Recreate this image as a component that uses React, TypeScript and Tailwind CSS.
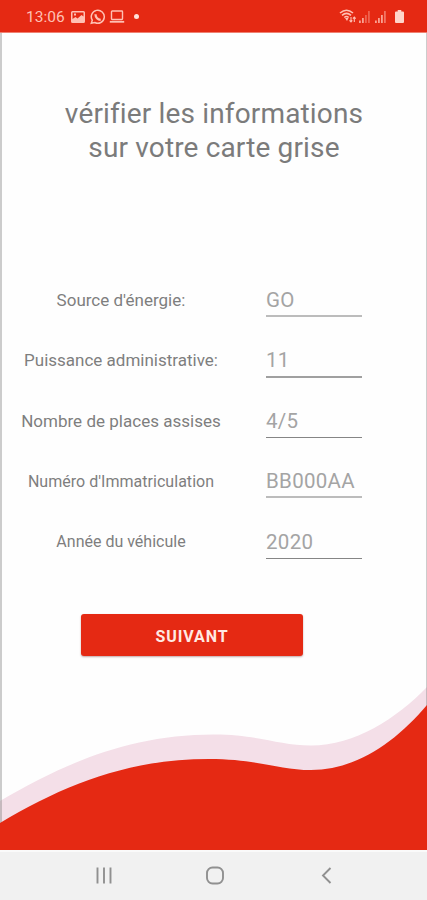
type Field = {
  label: string;
  value: string;
  labelClass: string;
  lineClass: string;
};

const fields: Field[] = [
  { label: "Source d'énergie:", value: 'GO', labelClass: 'text-[17px]', lineClass: 'h-[2px] bg-[#bcbcbc]' },
  { label: 'Puissance administrative:', value: '11', labelClass: 'text-[17px]', lineClass: 'mt-px h-[1.5px] bg-[#a0a0a0]' },
  { label: 'Nombre de places assises', value: '4/5', labelClass: 'pt-[0.6px] text-[17px] tracking-[0.02px]', lineClass: 'mt-px h-px bg-[#858585]' },
  { label: "Numéro d'Immatriculation", value: 'BB000AA', labelClass: 'pt-[0.6px] text-[16px] tracking-[0.03px]', lineClass: 'h-[2px] bg-[#bcbcbc]' },
  { label: 'Année du véhicule', value: '2020', labelClass: 'pt-[0.6px] text-[16px]', lineClass: 'mt-px h-px bg-[#858585]' },
];

function StatusBar() {
  return (
    <header className="flex h-[33px] shrink-0 items-center justify-between border-b border-[#ef8172] bg-[#e52913] pl-[26px] pr-[22px] text-[#ffc0b3]">
      <div className="flex items-center pt-px">
        <span className="w-[45px] text-[15.5px] leading-5">13:06</span>
        <svg width="14" height="12" viewBox="0 0 14 12">
          <path fill="currentColor" fillRule="evenodd" d="M1.500 0h11Q14 0 14 1.500v9Q14 12 12.500 12h-11Q0 12 0 10.500v-9Q0 0 1.500 0ZM1.500 8l3-2 2 1.500 4-3.500 2 1.500V1.500h-11ZM3 2.500h2v2H3Z" />
        </svg>
        <svg width="16" height="16" viewBox="0 0 16 16" className="ml-[5px]" fill="none" stroke="currentColor" strokeWidth="1.500">
          <path d="M1.300 14.200l1-3A6.500 6.500 0 1 1 4.800 13.500Z" />
          <path d="M5.500 5.300c0 3 2.300 5.300 5.200 5.500" strokeWidth="2.300" />
        </svg>
        <svg width="16" height="13" viewBox="0 0 16 13" className="ml-[3px]" fill="none" stroke="currentColor" strokeWidth="1.400">
          <rect x="2.500" y="1" width="11" height="8.500" rx="0.700" />
          <path d="M0.800 11.800h14.400" strokeWidth="1.800" />
        </svg>
        <i className="ml-[9px] h-[5px] w-[5px] rounded-full bg-[#ffe0d9]" />
      </div>
      <div className="flex items-center">
        <svg width="18" height="14" viewBox="0 0 18 14" fill="none" stroke="currentColor" strokeWidth="1.600">
          <path d="M1 4Q7.500 -1.500 14 4M3 6.300Q7.500 2.500 12 6.300M5.300 8.500Q7.500 6.500 9.700 8.500" />
          <path d="M6 9h3.500L8 12Z" fill="currentColor" stroke="none" />
          <path d="M12 8v5M10.500 11.300 12 13l1.300-1.700M15.300 13V8m-1.400 1.700 1.400-1.700 1.400 1.700" strokeWidth="1.100" />
        </svg>
        <svg width="13" height="12" viewBox="0 0 13 12" className="ml-px mt-[2px]" fill="currentColor">
          <path d="M1 9.500h1.800V12H1zM4 7h1.800v5H4z" opacity=".8" />
          <path d="M7 4h1.800v8H7zM10 0h1.800v12H10z" opacity=".38" />
        </svg>
        <svg width="13" height="12" viewBox="0 0 13 12" className="ml-[3px] mt-[2px]" fill="currentColor">
          <path d="M1 9.500h1.800V12H1zM4 7h1.800v5H4zM7 4h1.800v8H7z" opacity=".8" />
          <path d="M10 0h1.800v12H10z" opacity=".5" />
        </svg>
        <svg width="9" height="13" viewBox="0 0 9 13" className="ml-[8px] mr-px mt-px" fill="#ffd5ca">
          <path d="M2.700 0h3.600v1.500H8q1 0 1 1V12q0 1-1 1H1q-1 0-1-1V2.500q0-1 1-1h1.700Z" />
        </svg>
      </div>
    </header>
  );
}

function FieldRow({ label, value, labelClass, lineClass }: Field) {
  return (
    <div className="flex h-[60.4px] items-start">
      <div className="flex w-[238px] justify-center">
        <span className={`whitespace-nowrap leading-[30px] text-[#7e7e7e] ${labelClass}`}>{label}</span>
      </div>
      <div className="ml-[26px] w-[96px]">
        <div className="h-[30px] whitespace-nowrap text-[20.5px] leading-[30px] tracking-[0.3px] text-[#a4a4a4]">{value}</div>
        <div className={lineClass} />
      </div>
    </div>
  );
}

function Wave() {
  return (
    <svg width="427" height="180" viewBox="0 670 427 180" className="block shrink-0">
      <path d="M0 801C65 763 130 734.500 214 734.500C258 734.500 279 745.500 311 745.500C355 745.500 397 718 427 687V850H0Z" fill="#f4dfe8" />
      <path d="M0 670H2V823H0ZM426 670H427V706H426Z" fill="#777" fillOpacity=".37" />
      <path d="M0 823C65 784 130 759 209 759C258 759 279 770 311 770C355 770 395 743 427 705V850H0Z" fill="#e52913" />
    </svg>
  );
}

export default function App() {
  return (
    <div className="flex h-[900px] w-[427px] flex-col overflow-hidden bg-[#fefefe] font-['Roboto',sans-serif]">
      <StatusBar />
      <main className="flex h-[637px] shrink-0 flex-col border-l-2 border-r border-l-[#cccccc] border-r-[#cccccc]">
        <h1 className="mt-[64px] text-center text-[28px] font-normal leading-[34px] tracking-[0.15px] text-[#7b7b7b]">
          vérifier les informations<br />sur votre carte grise
        </h1>
        <section className="mt-[120px] h-[302px]">
          {fields.map((field) => <FieldRow key={field.label} {...field} />)}
        </section>
        <button className="ml-[79px] mt-[27px] h-[42px] w-[222px] rounded-[3px] bg-[#e52913] pt-[3px] text-[16px] font-bold tracking-[0.9px] text-[#ffe9e3] shadow-[0_1px_2px_rgba(80,0,0,0.35)]">
          SUIVANT
        </button>
      </main>
      <Wave />
      <nav className="h-[50px] shrink-0 border-t-2 border-[#fafafa] bg-[#f1f1f1]">
        <svg width="427" height="48" viewBox="0 852 427 48" fill="none" stroke="#909090" strokeWidth="1.900">
          <path d="M97.500 867.500v16M104 867.500v16M110.500 867.500v16" />
          <rect x="207" y="867.500" width="16" height="16" rx="5.500" />
          <path d="M330.500 868l-7.500 7.500 7.500 7.500" />
        </svg>
      </nav>
    </div>
  );
}
